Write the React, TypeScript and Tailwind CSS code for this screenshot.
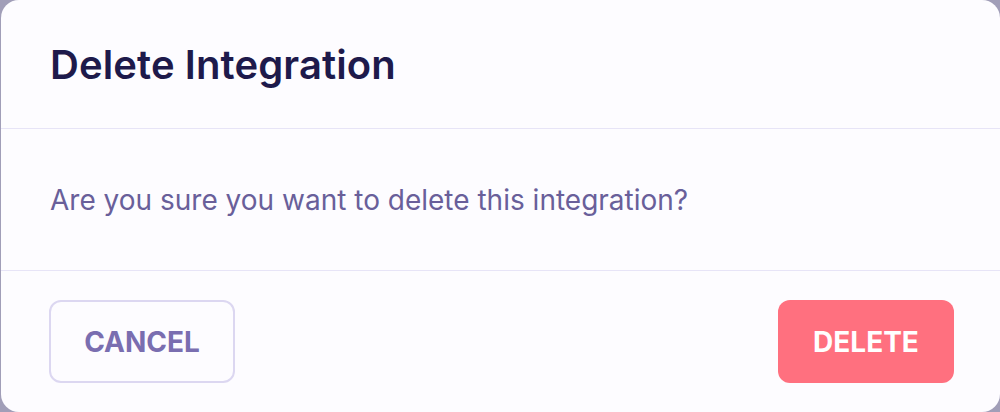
export default function App() {
  return (
    <div
      className="h-[412px] w-[1000px] overflow-hidden bg-[#a19eb8] pl-[1px]"
      style={{ fontFamily: "Inter, 'Noto Sans', sans-serif" }}
    >
      <div className="flex h-[412px] flex-col rounded-[18px] bg-[#fdfcff]">
        <div className="flex h-[129px] items-center border-b border-[#e7e4f7] px-[49px] pt-[2px]">
          <h2 className="text-[40px] font-semibold tracking-[0.1px] text-[#1e1a4b]">Delete Integration</h2>
        </div>
        <div className="flex h-[142px] items-center border-b border-[#e7e4f7] px-[49px] pt-[1px]">
          <p className="text-[28px] text-[#695f9a]">Are you sure you want to delete this integration?</p>
        </div>
        <div className="flex items-start justify-between pl-[48px] pr-[46px] pt-[29px]">
          <button className="flex h-[83px] w-[186px] items-center justify-center rounded-[12px] border-2 border-[#dcd7f1] text-[28px] font-bold text-[#7a6eb0]">
            CANCEL
          </button>
          <button className="flex h-[83px] w-[176px] items-center justify-center rounded-[12px] bg-[#ff707f] text-[28px] font-bold text-white">
            DELETE
          </button>
        </div>
      </div>
    </div>
  );
}
